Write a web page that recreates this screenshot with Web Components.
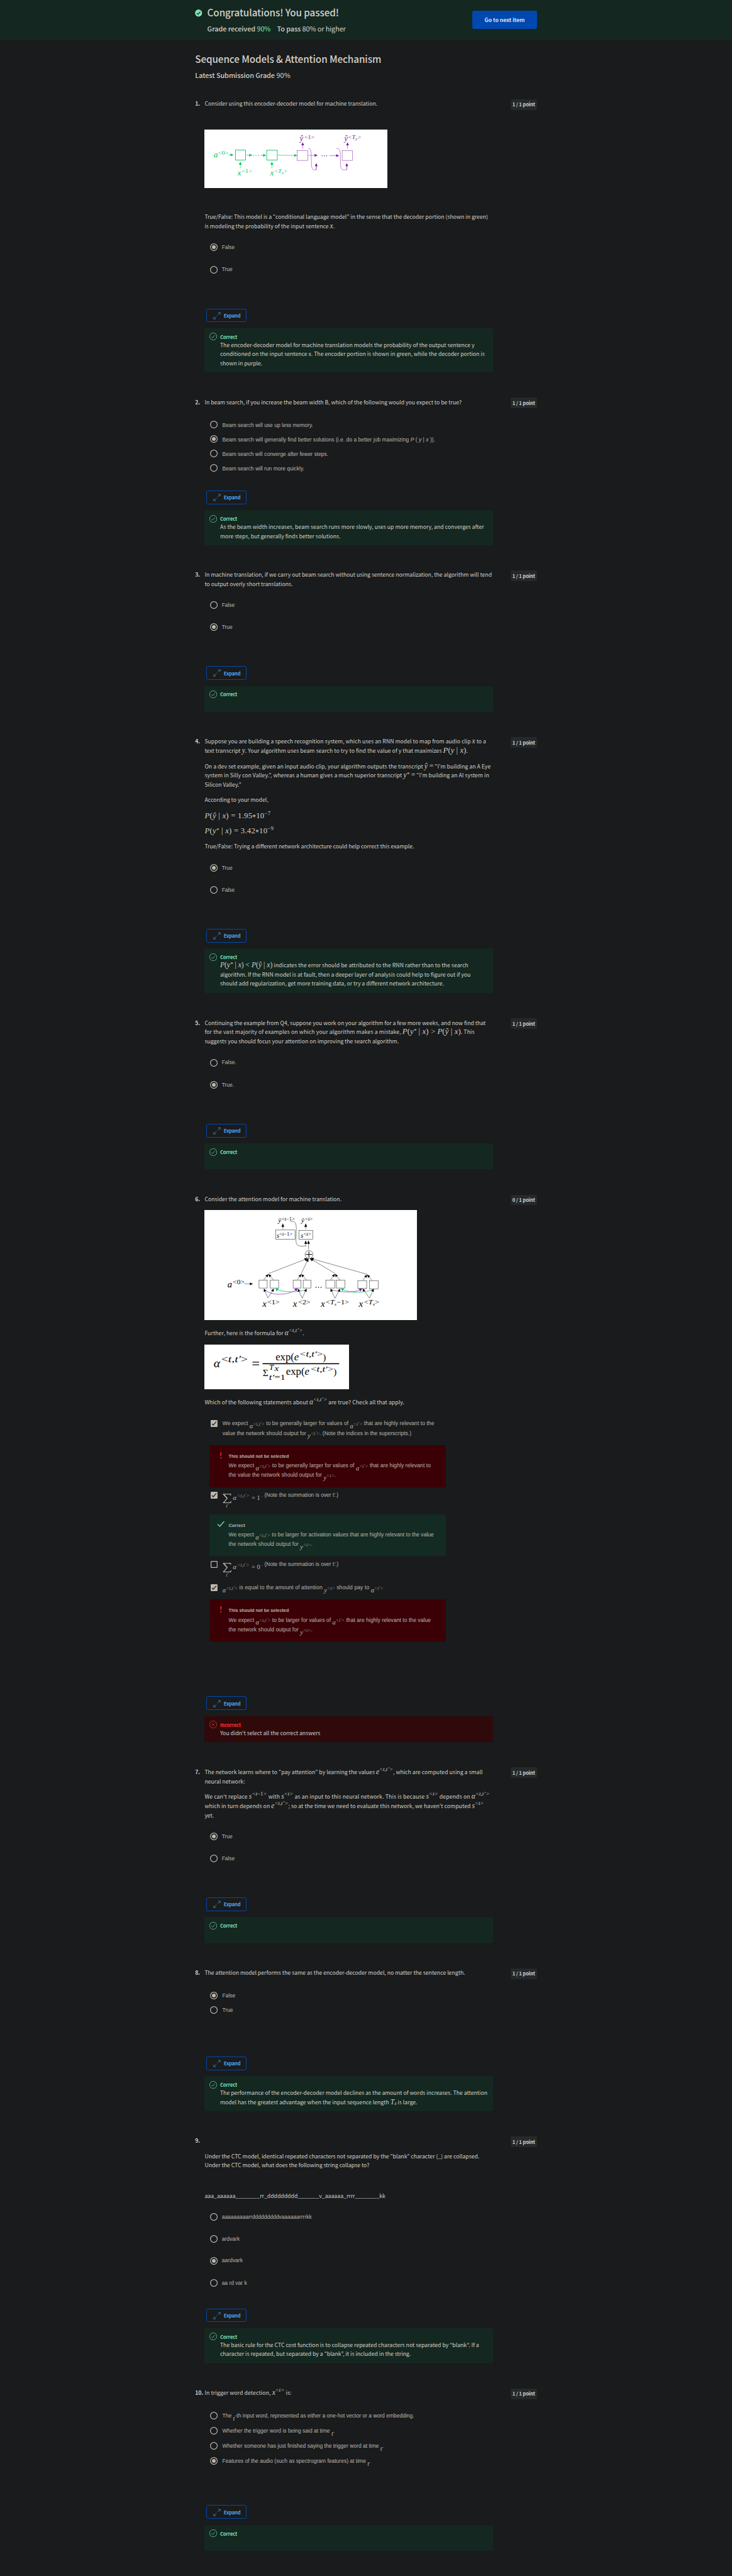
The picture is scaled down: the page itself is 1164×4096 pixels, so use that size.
<!DOCTYPE html>
<html lang="en">
<head>
<meta charset="utf-8">
<title>Sequence Models &amp; Attention Mechanism</title>
<style>
html,body{margin:0;padding:0;background:#191b1c;overflow:hidden;height:4096px}
</style>
</head>
<body>
<quiz-page>
  <result-banner slot="banner"></result-banner>
  <quiz-title></quiz-title>

  <quiz-question num="1." score="1 / 1 point">
    <q-line w="453">Consider using this encoder-decoder model for machine translation.</q-line>
    <encoder-diagram style="margin-top:56px"></encoder-diagram>
    <q-line w="743" style="margin-top:64px">True/False: This model is a “conditional language model” in the sense that the decoder portion (shown in green)</q-line>
    <q-line w="341">is modeling the probability of the input sentence <m-x>x</m-x>.</q-line>
    <quiz-option checked plain style="margin-top:34px"><q-line w="34">False</q-line></quiz-option>
    <quiz-option plain style="margin-top:38px"><q-line w="28">True</q-line></quiz-option>
    <expand-button style="margin-top:92px"></expand-button>
    <quiz-feedback>
      <q-line w="667">The encoder-decoder model for machine translation models the probability of the output sentence y</q-line>
      <q-line w="694">conditioned on the input sentence x. The encoder portion is shown in green, while the decoder portion is</q-line>
      <q-line w="111">shown in purple.</q-line>
    </quiz-feedback>
  </quiz-question>

  <quiz-question num="2." score="1 / 1 point">
    <q-line w="674">In beam search, if you increase the beam width B, which of the following would you expect to be true?</q-line>
    <quiz-option style="margin-top:37px"><q-line w="238">Beam search will use up less memory.</q-line></quiz-option>
    <quiz-option checked style="margin-top:18px"><q-line w="558">Beam search will generally find better solutions (i.e. do a better job maximizing <i>P</i> ( <i>y</i> | <i>x</i> )).</q-line></quiz-option>
    <quiz-option style="margin-top:18px"><q-line w="278">Beam search will converge after fewer steps.</q-line></quiz-option>
    <quiz-option style="margin-top:18px"><q-line w="215">Beam search will run more quickly.</q-line></quiz-option>
    <expand-button style="margin-top:48px"></expand-button>
    <quiz-feedback>
      <q-line w="692">As the beam width increases, beam search runs more slowly, uses up more memory, and converges after</q-line>
      <q-line w="316">more steps, but generally finds better solutions.</q-line>
    </quiz-feedback>
  </quiz-question>

  <quiz-question num="3." score="1 / 1 point">
    <q-line w="753">In machine translation, if we carry out beam search without using sentence normalization, the algorithm will tend</q-line>
    <q-line w="231">to output overly short translations.</q-line>
    <quiz-option plain style="margin-top:33px"><q-line w="34">False</q-line></quiz-option>
    <quiz-option checked plain style="margin-top:38px"><q-line w="28">True</q-line></quiz-option>
    <expand-button style="margin-top:92px"></expand-button>
    <quiz-feedback></quiz-feedback>
  </quiz-question>

  <quiz-question num="4." score="1 / 1 point">
    <q-line w="738">Suppose you are building a speech recognition system, which uses an RNN model to map from audio clip <m-x>x</m-x> to a</q-line>
    <q-line w="690">text transcript <m-x>y</m-x>. Your algorithm uses beam search to try to find the value of y that maximizes <m-x big>P<b>(</b>y <b>|</b> x<b>)</b></m-x>.</q-line>
    <q-line w="750" style="margin-top:17px">On a dev set example, given an input audio clip, your algorithm outputs the transcript <m-x>ŷ <b>=</b></m-x> “I’m building an A Eye</q-line>
    <q-line w="746">system in Silly con Valley.”, whereas a human gives a much superior transcript <m-x>y<sup class="star">*</sup> <b>=</b></m-x> “I’m building an AI system in</q-line>
    <q-line w="96">Silicon Valley.”</q-line>
    <q-line w="167" style="margin-top:16px">According to your model,</q-line>
    <q-line w="173" style="margin-top:18px"><m-x big>P<b>(</b>ŷ <b>|</b> x<b>) = 1.95</b><b class="mul">*</b><b>10</b><sup class="up">−7</sup></m-x></q-line>
    <q-line w="181" style="margin-top:16px"><m-x big>P<b>(</b>y<sup class="star">*</sup> <b>|</b> x<b>) = 3.42</b><b class="mul">*</b><b>10</b><sup class="up">−9</sup></m-x></q-line>
    <q-line w="549" style="margin-top:16px">True/False: Trying a different network architecture could help correct this example.</q-line>
    <quiz-option checked plain style="margin-top:34px"><q-line w="28">True</q-line></quiz-option>
    <quiz-option plain style="margin-top:38px"><q-line w="34">False</q-line></quiz-option>
    <expand-button style="margin-top:92px"></expand-button>
    <quiz-feedback>
      <q-line w="651"><m-x mid>P<b>(</b>y<sup class="star">*</sup> <b>|</b> x<b>) &lt;</b> P<b>(</b>ŷ <b>|</b> x<b>)</b></m-x> indicates the error should be attributed to the RNN rather than to the search</q-line>
      <q-line w="657">algorithm. If the RNN model is at fault, then a deeper layer of analysis could help to figure out if you</q-line>
      <q-line w="587">should add regularization, get more training data, or try a different network architecture.</q-line>
    </quiz-feedback>
  </quiz-question>

  <quiz-question num="5." score="1 / 1 point" style="margin-top:67px">
    <q-line w="737">Continuing the example from Q4, suppose you work on your algorithm for a few more weeks, and now find that</q-line>
    <q-line w="708">for the vast majority of examples on which your algorithm makes a mistake, <m-x big>P<b>(</b>y<sup class="star">*</sup> <b>|</b> x<b>) &gt;</b> P<b>(</b>ŷ <b>|</b> x<b>)</b></m-x>. This</q-line>
    <q-line w="509">suggests you should focus your attention on improving the search algorithm.</q-line>
    <quiz-option plain style="margin-top:34px"><q-line w="38">False.</q-line></quiz-option>
    <quiz-option checked plain style="margin-top:38px"><q-line w="32">True.</q-line></quiz-option>
    <expand-button style="margin-top:92px"></expand-button>
    <quiz-feedback></quiz-feedback>
  </quiz-question>

  <quiz-question num="6." score="0 / 1 point">
    <q-line w="359">Consider the attention model for machine translation.</q-line>
    <attention-diagram style="margin-top:16px"></attention-diagram>
    <q-line w="261" style="margin-top:23px">Further, here is the formula for <m-x>α<sup>&lt;t,t’&gt;</sup></m-x>.</q-line>
    <alpha-formula style="margin-top:18px"></alpha-formula>
    <q-line w="523.5" style="margin-top:23px">Which of the following statements about <m-x>α<sup>&lt;t,t’&gt;</sup></m-x> are true? Check all that apply.</q-line>
    <quiz-option box checked style="margin-top:31px">
      <q-line w="555">We expect <m-x low>α<sup>&lt;t,t′&gt;</sup></m-x> to be generally larger for values of <m-x low>α<sup>&lt;t′&gt;</sup></m-x> that are highly relevant to the</q-line>
      <q-line w="495">value the network should output for <m-x low>y<sup>&lt;t′&gt;</sup></m-x>. (Note the indices in the superscripts.)</q-line>
    </quiz-option>
    <option-note kind="bad" heading="This should not be selected" hw="158" style="margin-top:19px">
      <q-line w="530">We expect <m-x low>α<sup>&lt;t,t′&gt;</sup></m-x> to be generally larger for values of <m-x low>a<sup>&lt;t′&gt;</sup></m-x> that are highly relevant to</q-line>
      <q-line w="281">the value the network should output for <m-x low>y<sup>&lt;t&gt;</sup></m-x>.</q-line>
    </option-note>
    <quiz-option box checked style="margin-top:9px"><sum-line rhs="1"></sum-line></quiz-option>
    <option-note kind="good" heading="Correct" hw="43" style="margin-top:37px">
      <q-line w="538">We expect <m-x low>α<sup>&lt;t,t′&gt;</sup></m-x> to be larger for activation values that are highly relevant to the value</q-line>
      <q-line w="220">the network should output for <m-x low>y<sup>&lt;t&gt;</sup></m-x>.</q-line>
    </option-note>
    <quiz-option box style="margin-top:9px"><sum-line rhs="0"></sum-line></quiz-option>
    <quiz-option box checked style="margin-top:36px"><q-line w="422"><m-x low>α<sup>&lt;t,t′&gt;</sup></m-x> is equal to the amount of attention <m-x low>y<sup>&lt;t&gt;</sup></m-x> should pay to <m-x low>α<sup>&lt;t′&gt;</sup></m-x></q-line></quiz-option>
    <option-note kind="bad" heading="This should not be selected" hw="158" style="margin-top:19px">
      <q-line w="530">We expect <m-x low>α<sup>&lt;t,t′&gt;</sup></m-x> to be larger for values of <m-x low>a<sup>&lt;t′&gt;</sup></m-x> that are highly relevant to the value</q-line>
      <q-line w="220">the network should output for <m-x low>y<sup>&lt;t&gt;</sup></m-x>.</q-line>
    </option-note>
    <expand-button style="margin-top:144px"></expand-button>
    <quiz-feedback wrong>
      <q-line w="263">You didn't select all the correct answers</q-line>
    </quiz-feedback>
  </quiz-question>

  <quiz-question num="7." score="1 / 1 point">
    <q-line w="729">The network learns where to “pay attention” by learning the values <m-x>e<sup>&lt;t,t’&gt;</sup></m-x>, which are computed using a small</q-line>
    <q-line w="106" style="margin-top:1px">neural network:</q-line>
    <q-line w="747" style="margin-top:15.5px">We can't replace <m-x>s<sup>&lt;t<span style="font-style:normal">−1</span>&gt;</sup></m-x> with <m-x>s<sup>&lt;t&gt;</sup></m-x> as an input to this neural network. This is because <m-x>s<sup>&lt;t&gt;</sup></m-x> depends on <m-x>α<sup>&lt;t,t’&gt;</sup></m-x></q-line>
    <q-line w="732" style="margin-top:.5px">which in turn depends on <m-x>e<sup>&lt;t,t’&gt;</sup></m-x>; so at the time we need to evaluate this network, we haven’t computed <m-x>s<sup>&lt;t&gt;</sup></m-x></q-line>
    <q-line w="24.5" style="margin-top:1px">yet.</q-line>
    <quiz-option checked plain style="margin-top:33px"><q-line w="28">True</q-line></quiz-option>
    <quiz-option plain style="margin-top:38px"><q-line w="34">False</q-line></quiz-option>
    <expand-button style="margin-top:92px"></expand-button>
    <quiz-feedback></quiz-feedback>
  </quiz-question>

  <quiz-question num="8." score="1 / 1 point">
    <q-line w="683">The attention model performs the same as the encoder-decoder model, no matter the sentence length.</q-line>
    <quiz-option checked style="margin-top:37px"><q-line w="34">False</q-line></quiz-option>
    <quiz-option style="margin-top:18px"><q-line w="28">True</q-line></quiz-option>
    <expand-button style="margin-top:112px"></expand-button>
    <quiz-feedback>
      <q-line w="701">The performance of the encoder-decoder model declines as the amount of words increases. The attention</q-line>
      <q-line w="517">model has the greatest advantage when the input sequence length <m-x mid>T<sub>x</sub></m-x> is large.</q-line>
    </quiz-feedback>
  </quiz-question>

  <quiz-question num="9." score="1 / 1 point">
    <q-line w="720.6" style="margin-top:40px">Under the CTC model, identical repeated characters not separated by the “blank” character (_) are collapsed.</q-line>
    <q-line w="432">Under the CTC model, what does the following string collapse to?</q-line>
    <q-line w="474" style="margin-top:56px">aaa_aaaaaa________rr_ddddddddd_______v_aaaaaa_rrrr________kk</q-line>
    <quiz-option plain style="margin-top:33px"><q-line w="236">aaaaaaaaarrdddddddddvaaaaaarrrrkk</q-line></quiz-option>
    <quiz-option plain style="margin-top:38px"><q-line w="47">ardvark</q-line></quiz-option>
    <quiz-option checked plain style="margin-top:37px"><q-line w="55">aardvark</q-line></quiz-option>
    <quiz-option plain style="margin-top:38px"><q-line w="66">aa rd var k</q-line></quiz-option>
    <expand-button style="margin-top:57px"></expand-button>
    <quiz-feedback>
      <q-line w="679">The basic rule for the CTC cost function is to collapse repeated characters not separated by "blank". If a</q-line>
      <q-line w="500">character is repeated, but separated by a “blank”, it is included in the string.</q-line>
    </quiz-feedback>
  </quiz-question>

  <quiz-question num="10." score="1 / 1 point">
    <q-line w="228">In trigger word detection, <m-x>x<sup>&lt;t&gt;</sup></m-x> is:</q-line>
    <quiz-option style="margin-top:37px"><q-line w="503">The <m-x low>t</m-x>-th input word, represented as either a one-hot vector or a word embedding.</q-line></quiz-option>
    <quiz-option style="margin-top:20px"><q-line w="294.5">Whether the trigger word is being said at time <m-x low>t</m-x>.</q-line></quiz-option>
    <quiz-option style="margin-top:19px"><q-line w="423">Whether someone has just finished saying the trigger word at time <m-x low>t</m-x>.</q-line></quiz-option>
    <quiz-option checked style="margin-top:20px"><q-line w="389">Features of the audio (such as spectrogram features) at time <m-x low>t</m-x>.</q-line></quiz-option>
    <expand-button style="margin-top:106px"></expand-button>
    <quiz-feedback></quiz-feedback>
  </quiz-question>
</quiz-page>

<script>
const define = (name, html) => customElements.define(name, class extends HTMLElement {
  constructor() { super(); this.attachShadow({ mode: 'open' }); }
  connectedCallback() {
    this.shadowRoot.innerHTML = typeof html === 'function' ? html(this) : html;
  }
});
const MATH = '"Liberation Serif",serif';

define('quiz-page', `<style>
:host{display:block;zoom:.6065;width:1919px;height:6753px;overflow:hidden;background:#191b1c;color:#d3cfc9;
font:400 14.4px/24px "Noto Sans CJK KR","Noto Sans",sans-serif}
main{display:flex;flex-direction:column;width:896px;margin:0 auto}
</style><slot name="banner"></slot><main><slot></slot></main>`);

define('result-banner', `<style>
:host{display:block;height:104px;background:#142720}
.in{display:flex;width:896px;margin:0 auto;height:104px;align-items:flex-start}
svg{width:19px;height:19px;margin:25px 13px 0 0;flex:none}
.t{flex:1;padding-top:15px}
h1{margin:0;font-size:25.2px;font-weight:500;line-height:36px}
h1 q-line{height:36px;line-height:36px}
.g{display:flex;font-size:18px;line-height:28px;margin-top:9px}
.g q-line{height:28px;line-height:28px}
.b{font-weight:500}.grn{color:#7fe0b6}
button{width:169px;height:48px;margin:28px 0 0;padding:2px 0 0 32px;border:0;border-radius:4px;background:#0048b0;color:#dbe2ea;
font:700 14.4px/24px "Noto Sans CJK KR",sans-serif;text-align:left}
</style><div class="in">
<svg viewBox="0 0 19 19"><circle cx="9.5" cy="9.5" r="9.3" fill="#7fe0b6"/><path d="M5.2 9.8l3 3.2 5.6-6.8" fill="none" stroke="#142720" stroke-width="2"/></svg>
<div class="t"><h1><q-line w="345">Congratulations! You passed!</q-line></h1>
<div class="g"><q-line class="b" w="126">Grade received</q-line><q-line class="grn" w="36" style="margin-left:4px">90%</q-line><q-line class="b" w="62" style="margin-left:17px">To pass</q-line><q-line w="114" style="margin-left:4px">80% or higher</q-line></div></div>
<button><q-line w="105">Go to next item</q-line></button></div>`);

define('quiz-title', `<style>
:host{display:block;height:156px}
h2,h3{margin:0;font-weight:500}
h2{font-size:25.2px;padding-top:32px}
h2 q-line{height:36px;line-height:36px}
h3{font-size:18px;padding-top:11px;display:flex;gap:4px}
h3 q-line{height:28px;line-height:28px}
</style><h2><q-line w="488">Sequence Models &amp; Attention Mechanism</q-line></h2>
<h3><q-line w="209">Latest Submission Grade</q-line><q-line w="37" style="font-weight:400">90%</q-line></h3>`);

define('quiz-question', e => `<style>
:host{display:flex;align-items:flex-start}
:host(:not([num="1."])){margin-top:66px}
.n{width:25px;flex:none;font-weight:700;white-space:nowrap;padding-top:.6px}
.c{width:756px;flex:none;display:flow-root}
.s{margin-left:auto;width:68px;height:28px;box-sizing:border-box;padding:2px 4px 0;border-radius:4px;background:#25292b;font-weight:700;font-size:12.6px}
</style><div class="n">${e.getAttribute('num')}</div><div class="c"><slot></slot></div>
<div class="s"><q-line w="59.5">${e.getAttribute('score')}</q-line></div>`);

// A single line of text tracked to an exact measure.
define('q-line', e => `<style>
:host{display:block;white-space:nowrap;height:24px;width:${e.getAttribute('w')}px}
span{display:inline-block;padding-top:.6px}
</style><span><slot></slot></span>`);

define('m-x', `<style>
:host{font:italic 19px/0 ${MATH};line-height:0}
:host([big]){font-size:21px}
:host([low]){font-size:17px;vertical-align:-8px}
::slotted(b){font-style:normal;font-weight:400}
::slotted(b.mul){vertical-align:-4px;font-size:19px}
::slotted(sup){font-size:14.5px;line-height:0;vertical-align:8px}
::slotted(sup.star){vertical-align:4px}
::slotted(sup.up){font-style:normal}
:host([low]) ::slotted(sup){font-size:12.5px;vertical-align:7px;color:#9a958e}
::slotted(sub){font-size:12px;line-height:0;vertical-align:-1px}
</style><slot></slot>`);

define('quiz-option', e => {
  const on = e.hasAttribute('checked'), box = e.hasAttribute('box');
  const icon = box
    ? (on ? '<rect width="18" height="18" rx="2" fill="#bdb7af"/><path d="M3.2 9.6l3.4 3.6 8-9" fill="none" stroke="#191b1c" stroke-width="2"/>'
          : '<rect x="1" y="1" width="16" height="16" rx="1" fill="none" stroke="#bdb7af" stroke-width="2"/>')
    : '<circle cx="10" cy="10" r="9" fill="none" stroke="#bdb7af" stroke-width="2"/>' + (on ? '<circle cx="10" cy="10" r="5" fill="#bdb7af"/>' : '');
  const s = box ? 18 : 20;
  return `<style>
:host{display:flex;align-items:flex-start;height:20px;padding-left:15px;color:#bdb7af;font:14px/20px "Liberation Sans",Arial,sans-serif}
svg{flex:none;width:${s}px;height:${s}px;margin-right:11.5px}
::slotted(q-line){height:20px}
:host([plain]) svg{margin-right:10px}
:host([plain]) div{margin-top:-1px}
:host([box]){height:auto;line-height:25px}
:host([box]) svg{margin:4px 13px 0 1px}
:host([box]) ::slotted(q-line){height:25px}
</style><svg viewBox="0 0 ${s} ${s}">${icon}</svg><div><slot></slot></div>`;
});

define('sum-line', e => `<style>
:host{display:flex;height:25px;align-items:flex-start}
svg.f{width:106px;height:50px;flex:none;margin:0}
</style><svg class="f" viewBox="0 0 106 50" fill="#bdb7af" font-family='${MATH}'>
<path d="M.6 8.8H22v5h-.8q-.6-3.600-4-3.600H5l8.400 10.600L4 31.500h12.600q4 0 5.200-4H23l-1.200 5.500H.6v-1L10.600 21 .6 9.800z"/>
<text x="9" y="45" font-size="12" font-style="italic">t′</text>
<text x="27" y="25" font-size="18" font-style="italic">α</text>
<text x="38" y="18" font-size="12.500" font-style="italic" fill="#9a958e" textLength="32">&lt;t,t′&gt;</text>
<text x="76" y="25" font-size="17">= ${e.getAttribute('rhs')}</text>
<text x="102" y="17" font-size="12">.</text></svg>
<q-line w="194" style="height:25px;margin-left:4px">(Note the summation is over t'.)</q-line>`);

define('option-note', e => `<style>
:host{display:flex;box-sizing:border-box;width:621px;height:110px;margin-left:12px;padding:16px 0 0 19px;color:#bdb7af;
font:14px/25px "Liberation Sans",Arial,sans-serif;background:#3b0006}
:host([kind=good]){background:#132b23}
svg{width:24px;height:24px;margin-right:8px;flex:none}
q-line{font-weight:700;font-size:12px;height:25px}
::slotted(q-line){height:25px}
</style><svg viewBox="0 0 24 24">${e.getAttribute('kind') === 'good'
  ? '<path d="M3.500 10.500l5.500 6L20.500 3.500" fill="none" stroke="#7fe0b6" stroke-width="2.200"/>'
  : '<path d="M10.500 2h3l-.6 10h-1.800z" fill="#ff2b2f"/><circle cx="12" cy="16.500" r="1.700" fill="#ff2b2f"/>'}</svg>
<div><q-line w="${e.getAttribute('hw')}">${e.getAttribute('heading')}</q-line><slot></slot></div>`);

define('expand-button', `<style>
:host{display:flex;box-sizing:border-box;width:105px;height:36px;margin-left:5px;border:1.500px solid #004aad;border-radius:4px;padding:5px 0 0 15px;color:#4ba3f7;
font-weight:700;font-size:12.6px}
svg{width:20px;height:20px;margin:2px 8.500px 0 0;flex:none}
</style><svg viewBox="0 0 20 20" fill="none" stroke="#4796d8" stroke-width="1.200"><path d="M13 1.500h5.500V7M18.200 1.800l-7 7M7 18.500H1.500V13M1.800 18.200l7-7"/></svg><q-line w="44">Expand</q-line>`);

define('quiz-feedback', e => {
  const bad = e.hasAttribute('wrong'), c = bad ? '#ff3336' : '#7fe0b6';
  return `<style>
:host{display:flex;box-sizing:border-box;min-height:68px;width:756px;margin-top:16px;padding:12px;background:${bad ? '#300a0a' : '#142720'}}
svg{width:20px;height:20px;margin-right:8.500px;flex:none}
.h{color:${c};font-weight:700;font-size:12.6px;height:20px;line-height:21px}
</style><svg viewBox="0 0 20 20" fill="none" stroke="${c}" stroke-width="1.100"><circle cx="10" cy="10" r="9.400"/>${bad
  ? '<path d="M5.800 5.800l8.400 8.400M14.200 5.800l-8.400 8.400"/>' : '<path d="M5.500 10.500l3 3 6-7"/>'}</svg>
<div><q-line class="h" w="${bad ? 55 : 45}">${bad ? 'Incorrect' : 'Correct'}</q-line><slot></slot></div>`;
});

// Diagram helpers: text run, box, arrow with a filled head, and dots.
const T = (x, y, s, fs, w, it = 1, f = '') => `<text x="${x}" y="${y}" font-size="${fs}"${it ? ' font-style="italic"' : ''}${w ? ` textLength="${w}" lengthAdjust="spacingAndGlyphs"` : ''}${f ? ` fill="${f}"` : ''} stroke="none">${s}</text>`;
const B = (x1, y1, x2, y2) => `<rect x="${x1}" y="${y1}" width="${x2 - x1}" height="${y2 - y1}" fill="none"/>`;
const A = (x1, y1, x2, y2, h = 8, hw = 3.6) => {
  const d = Math.hypot(x2 - x1, y2 - y1), ux = (x2 - x1) / d, uy = (y2 - y1) / d, bx = x2 - ux * h, by = y2 - uy * h;
  return `<path d="M${x1} ${y1}L${bx} ${by}" fill="none"/><path stroke="none" d="M${x2} ${y2}L${bx - uy * hw} ${by + ux * hw}L${bx + uy * hw} ${by - ux * hw}z"/>`;
};
const D = (xs, y) => xs.map(x => `<circle cx="${x}" cy="${y}" r="1.300" stroke="none"/>`).join('');
const SUBX = t => `&lt;<tspan font-style="italic">T</tspan><tspan font-style="italic" dy="3" font-size="11">${t}</tspan><tspan dy="-3">`;

define('encoder-diagram', `<style>:host{display:block;width:479px;height:153px;background:#fff}svg{display:block;width:479px;height:153px}</style>
<svg viewBox="0 0 479 153" font-family='${MATH}'>
<g fill="#00bf5f" stroke="#00bf5f" stroke-width="1">
${T(24.5, 72, 'a', 21, 11)}${T(36, 65.6, '&lt;0&gt;', 15, 27, 0)}${A(62.5, 66.4, 76.5, 66.4)}
<g stroke-width="1.400">${B(81.5, 53.8, 108, 79.9)}${B(163.400, 54.3, 191.3, 79.9)}</g>
${A(110, 67.2, 125.5, 67.2)}${D([128.6, 135.3, 142], 67.6)}${A(147, 67.600, 162, 67.600)}${A(193, 67.2, 243.7, 68)}
${A(94.3, 101.6, 94.3, 84.2)}${A(177, 101.6, 177, 84.2)}
${T(87, 119.8, 'x', 21, 9)}${T(98, 114, '&lt;1&gt;', 15, 27, 0)}
${T(172.7, 119.8, 'x', 21, 9)}${T(184, 114, SUBX('x') + '&gt;</tspan>', 15, 33, 0)}
</g>
<g fill="#7a0fa0" stroke="#9440b5" stroke-width="1">
${B(243.5, 55.4, 271.3, 81)}${B(361.3, 55.4, 388, 81)}
${A(257.8, 50.2, 257.8, 33.2)}${A(375.3, 50.2, 375.3, 33.2)}
${T(250.4, 30, 'ŷ', 21, 9)}${T(262, 25.500, '&lt;1&gt;', 15, 27, 0)}
${T(366.8, 30, 'ŷ', 21, 9)}${T(377, 25, SUBX('y') + '&gt;</tspan>', 15, 34, 0)}
${A(272.5, 67.6, 297, 67.6)}${D([309, 314.7, 320.8], 68.8)}${A(328, 68.4, 353.3, 68.4)}
<path d="M272 50Q279 47 280 62L281 94Q282 105.6 287 105.6H293.3V96M346 50Q355 47 356.500 62L357 94Q358 105.6 364 105.6H373.500V96" fill="none"/>
${A(293.3, 105.6, 293.3, 88)}${A(373.5, 105.6, 373.5, 88)}
</g></svg>`);

define('attention-diagram', () => {
  const tops = [[167.8, 168, 155, 182], [254, 168, 243, 268], [342, 167.500, 330.6, 355.7], [426.8, 169.5, 415.7, 439]];
  const vs = [[166.5, 230.4, 156, 182.5], [256.5, 231.4, 245, 268], [342.3, 231.600, 330.6, 356.3], [433, 230.800, 414.5, 444]];
  return `<style>:host{display:block;width:556px;height:289px;background:#fff}svg{display:block;width:556px;height:289px}</style>
<svg viewBox="0 0 556 289" font-family='${MATH}' fill="#000" stroke="#222" stroke-width=".9">
${T(193.5, 32.5, 'ŷ', 18, 8)}${T(202.7, 27.5, '&lt;<tspan font-style="italic">t</tspan>−1&gt;', 12.5, 34.5, 0)}
${T(254, 32.5, 'ŷ', 18, 8)}${T(264, 27.5, '&lt;<tspan font-style="italic">t</tspan>&gt;', 12.5, 20, 0)}
${A(205.7, 50, 205.7, 35, 9)}${A(265.7, 50, 265.7, 35, 9)}
${B(186.7, 52.5, 237.6, 76.4)}${B(248, 53.2, 284.7, 76.4)}
${T(189.2, 72, 's', 18, 7)}${T(196.5, 67, '&lt;<tspan font-style="italic">t</tspan>−1&gt;', 12.5, 34.5, 0)}
${T(252.2, 72, 's', 18, 7)}${T(260, 67, '&lt;<tspan font-style="italic">t</tspan>&gt;', 12.5, 20, 0)}
<path d="M226 30.500C238 28 241 34 241 50L240 78C240 92 244 96.500 265.7 94.3" fill="none"/>
${A(265.7, 95, 265.7, 79.6, 9)}${A(273, 103, 273, 79.6, 9)}
<circle cx="274.3" cy="116.4" r="10.400" fill="none"/><path d="M266 116.600H282.500M274 108.500V124.500" stroke-width="2"/>
${A(167.8, 166.8, 271.5, 126.5, 9, 4)}${A(254, 166.8, 273, 126.5, 9, 4)}${A(342, 166, 276, 126.5, 9, 4)}${A(426.8, 168.6, 277.5, 126.5, 9, 4)}
${tops.map(([x, y, a, b]) => A(a, 184, x, y, 8) + A(b, 184, x, y, 8)).join('')}
${[[143.3, 164.7], [172.7, 194.7], [232.7, 253.5], [259, 279.2], [318.4, 341.6], [346, 368.6]].map(([a, b]) => B(a, 184, b, 204.6)).join('')}
${B(402.3, 185, 425.5, 205.7)}${B(432.9, 185, 456, 206.8)}
${D([292.7, 299.4, 306], 203)}
${T(60.6, 202, 'a', 24, 12)}${T(74.7, 194.5, '&lt;0&gt;', 18, 30.5, 0)}${A(105, 193.6, 127.3, 193.6)}
<g fill="none" stroke-width="1.300"><path stroke="#9440b5" d="M156 207C171 225 220 225 241 209"/><path stroke="#00bf5f" d="M268 208C250 216 208 217 190 208"/>
<path stroke="#9440b5" d="M332 208C352 217 392 217 411 209"/><path stroke="#00bf5f" d="M444 208C425 217 380 219 362 208"/></g>
<g stroke="none"><path fill="#7a0fa0" d="M244 205l-8.500 2.500 6 5.500zM413.500 205.500l-9 1.500 5 6.500z"/><path fill="#00bf5f" d="M187 204.500l2 9 5.500-7zM358.500 204.500l3 9 4.500-7z"/></g>
${vs.map(([x, y, a, b]) => A(x, y, a, 206, 8) + A(x, y, b, 206, 8)).join('')}
${T(152, 253.6, 'x', 23, 11)}${T(164.7, 247, '&lt;1&gt;', 18, 32.500, 0)}
${T(232, 253.6, 'x', 23, 11)}${T(246, 247, '&lt;2&gt;', 18, 32, 0)}
${T(305, 253.6, 'x', 23, 11)}${T(318.4, 247, SUBX('x') + '−1&gt;</tspan>', 18, 60.600, 0)}
${T(405, 253.6, 'x', 23, 11)}${T(418.8, 247, SUBX('x') + '&gt;</tspan>', 18, 39.500, 0)}
</svg>`;
});

define('alpha-formula', () => {
  const I = s => `<tspan font-style="italic">${s}</tspan>`;
  const sup = `&lt;${I('t,t′')}&gt;`;
  return `<style>:host{display:block;width:378px;height:116px;background:#fff}svg{display:block;width:378px;height:116px}</style>
<svg viewBox="0 0 378 116" font-family='${MATH}' fill="#000">
${T(24.5, 59, 'α', 31, 17)}${T(44, 46, sup, 24, 70, 0)}
<rect x="126" y="45" width="17.500" height="2"/><rect x="126" y="52" width="17.500" height="2"/>
<rect x="152.500" y="48.800" width="201" height="2.600"/>
${T(186.7, 40.7, `exp(${I('e')}`, 26, 61, 0)}${T(250.4, 31.500, sup, 22, 60, 0)}${T(310.5, 40.700, ')', 25, 0, 0)}
${T(153, 83, 'Σ', 25, 15, 0)}${T(170, 66.400, 'T', 20, 12)}${T(184, 69.500, 'x', 19, 11)}
${T(169.6, 91.8, `${I('t′')}=1`, 20, 43, 0)}
${T(214, 78.6, `exp(${I('e')}`, 26, 61.5, 0)}${T(278.6, 70.500, sup, 22, 60, 0)}${T(338.600, 78.600, ')', 25, 0, 0)}
</svg>`;
});

// Tracks each line's letters so that the line fills its measure.
(function track(root) {
  root.querySelectorAll('*').forEach(el => {
    if (el.localName === 'q-line') {
      const w = +el.getAttribute('w'), host = el.getBoundingClientRect().width;
      const inner = el.shadowRoot.querySelector('span').getBoundingClientRect().width;
      if (w && host) el.style.letterSpacing = (w * (1 - inner / host) / el.textContent.length) + 'px';
    }
    if (el.shadowRoot) track(el.shadowRoot);
  });
})(document);
</script>
</body>
</html>
